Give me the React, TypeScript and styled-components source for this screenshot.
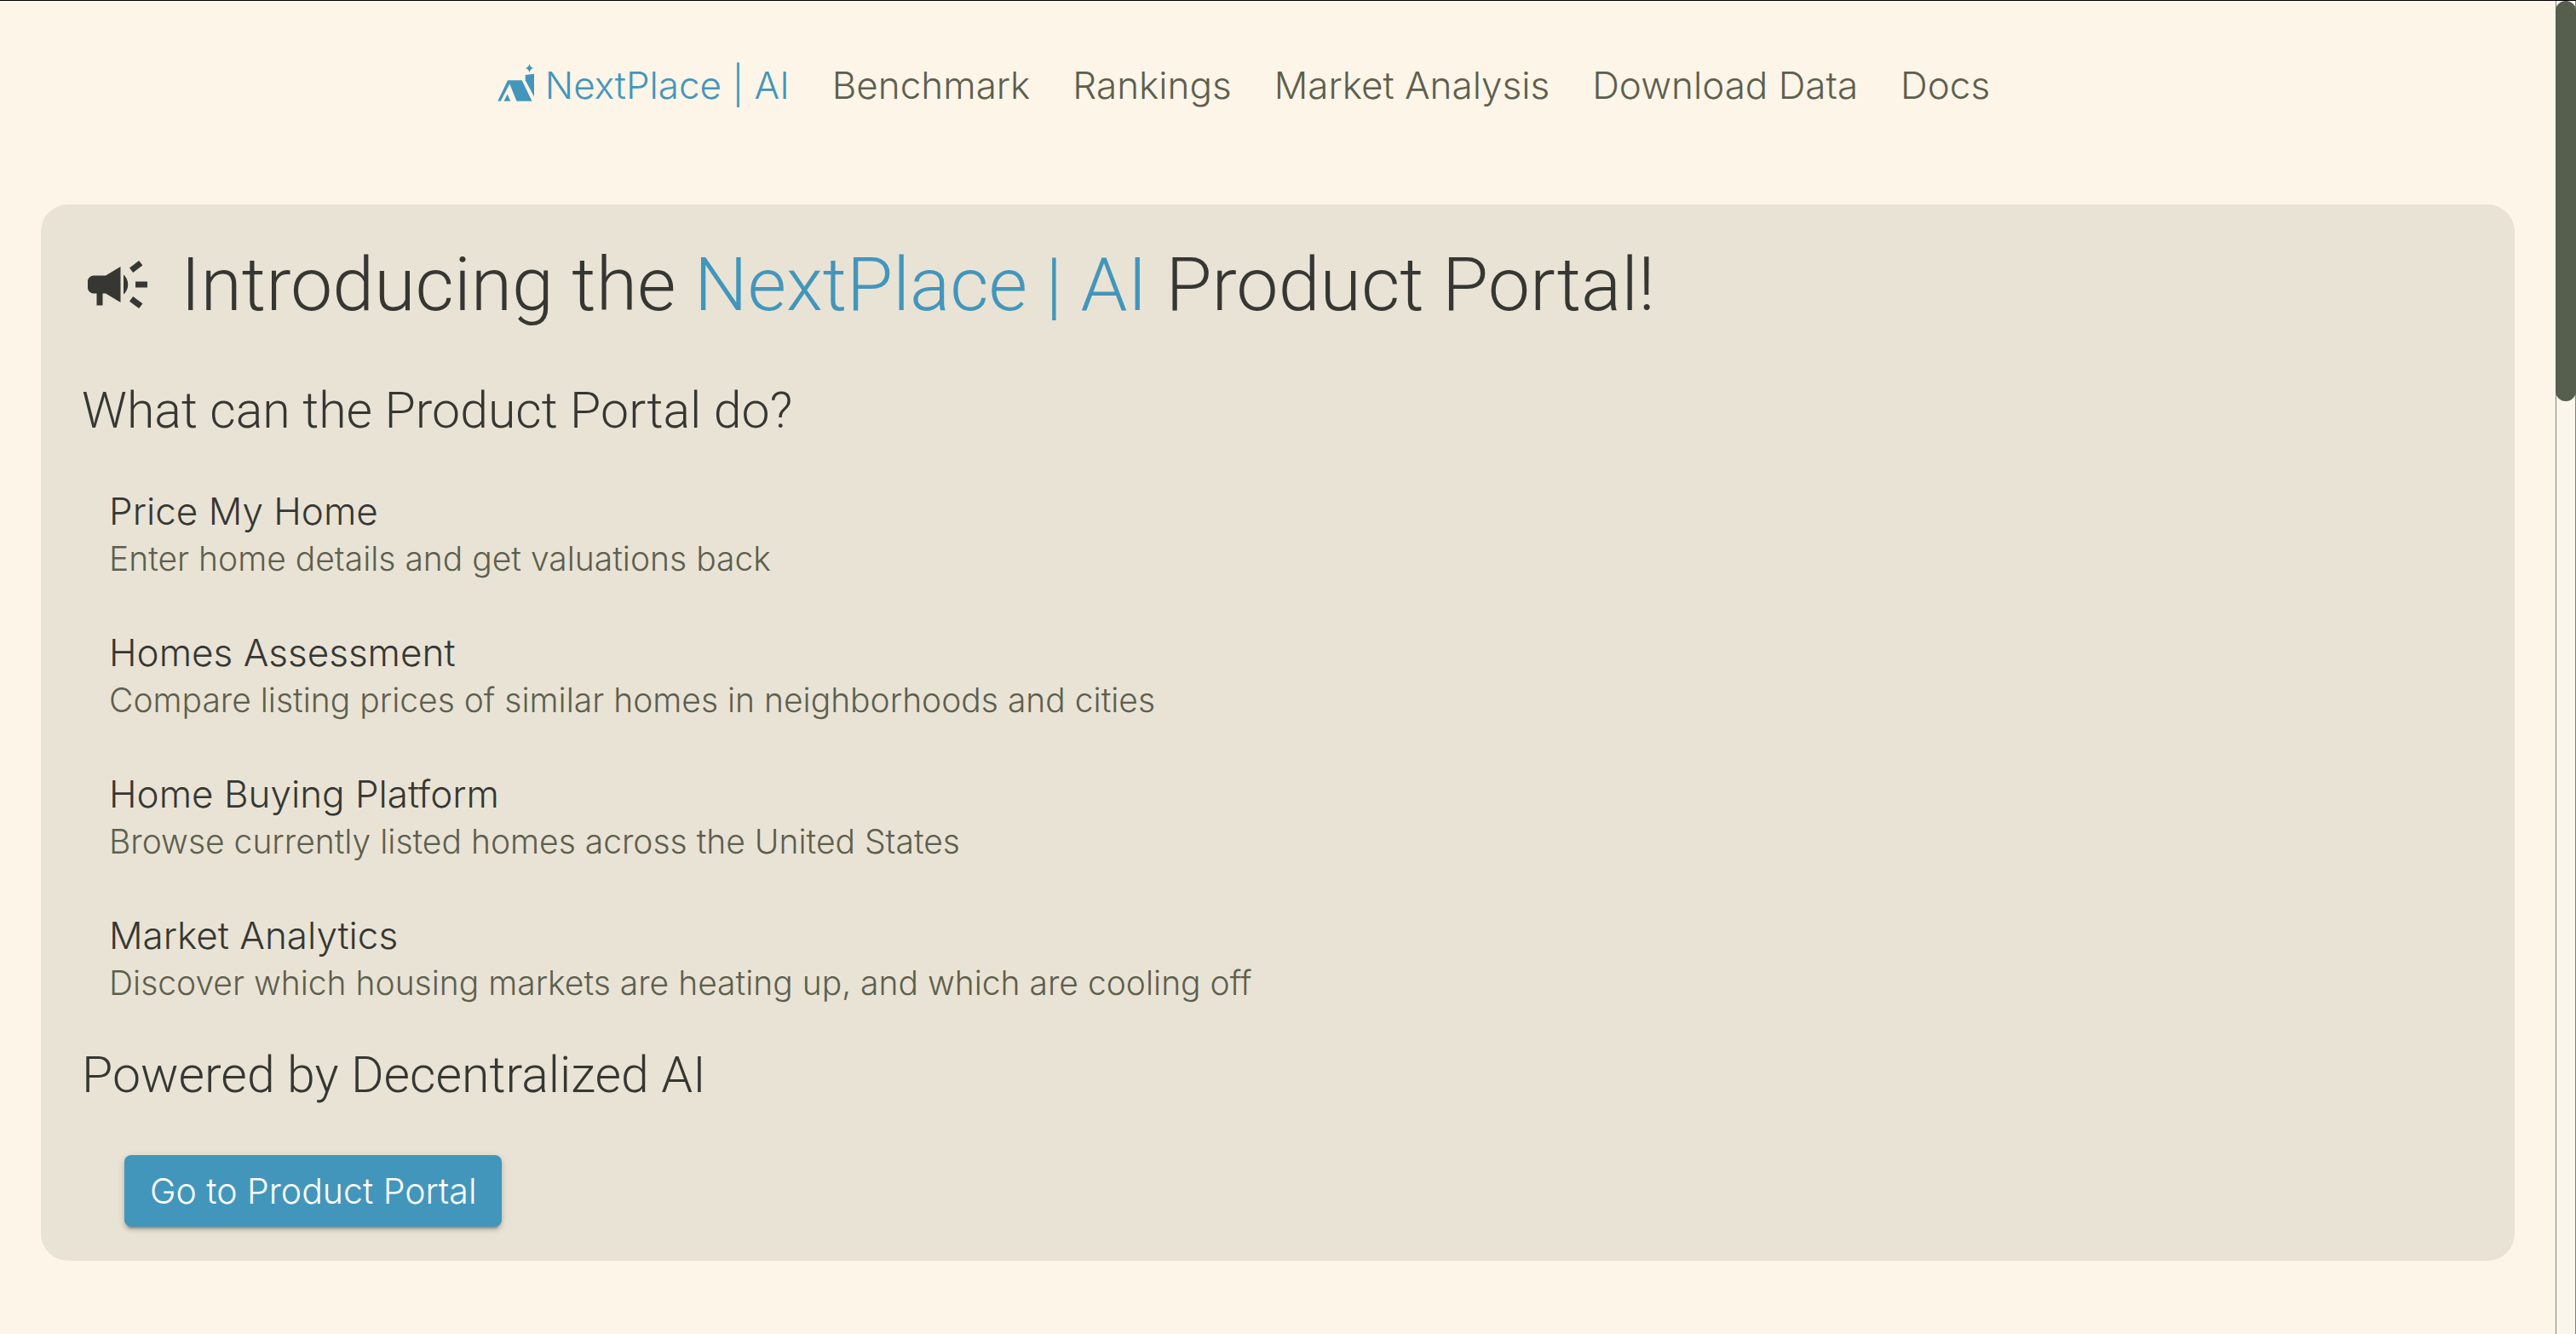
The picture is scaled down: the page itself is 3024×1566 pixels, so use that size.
import React from "react";
import styled, { createGlobalStyle } from "styled-components";
import { MdCampaign } from "react-icons/md";

const color = {
  page: "#fdf5e7",
  card: "#e9e3d5",
  accent: "#4396bb",
  ink: "#363733",
  muted: "#5d5f4e",
  thumb: "#565e4e",
};

const body = `"Inter", "Liberation Sans", sans-serif`;
const display = `"Roboto", "Liberation Sans", sans-serif`;

const GlobalStyle = createGlobalStyle`
  *, *::before, *::after { box-sizing: border-box; }
  body {
    margin: 0;
    background: ${color.page};
    color: ${color.ink};
    font-family: ${body};
    font-weight: 300;
    overflow: hidden;
  }
`;

const Shell = styled.div`
  display: flex;
  min-height: 100vh;
  border-top: 1px solid #000;
`;

const Page = styled.div`
  flex: 1;
  min-width: 0;
  padding: 0 48px;
`;

const Header = styled.header`
  display: flex;
  justify-content: center;
  padding: 71px 80px 112px 0;
`;

const Nav = styled.nav`
  display: flex;
  align-items: center;
  gap: 50px;
`;

const NavLink = styled.a<{ $brand?: boolean }>`
  display: flex;
  align-items: center;
  gap: 12px;
  color: ${(p) => (p.$brand ? color.accent : color.muted)};
  font-size: 44px;
  line-height: 56px;
  text-decoration: none;
  white-space: nowrap;
`;

const Mark = styled.svg`
  width: 44px;
  height: 50px;
  fill: currentColor;
`;

const Card = styled.main`
  padding: 48px 48px 40px;
  border-radius: 32px;
  background: ${color.card};
`;

const Title = styled.h1`
  display: flex;
  align-items: center;
  gap: 32px;
  margin: 0;
  font: 300 88px/92px ${display};

  svg {
    flex: none;
    width: 84px;
    height: 84px;
  }
`;

const Accent = styled.span`
  color: ${color.accent};
`;

const Subtitle = styled.h2<{ $top: number }>`
  margin: ${(p) => p.$top}px 0 0;
  font: 300 59px/76px ${display};
`;

const Features = styled.ul`
  display: flex;
  flex-direction: column;
  gap: 54px;
  margin: 52px 0 0;
  padding: 0 32px;
  list-style: none;
`;

const FeatureName = styled.h3`
  margin: 0;
  font-size: 44px;
  font-weight: 300;
  line-height: 56px;
`;

const FeatureText = styled.p`
  margin: 0;
  color: ${color.muted};
  font-size: 39px;
  line-height: 56px;
`;

const PortalButton = styled.button`
  display: block;
  margin: 56px 0 0 50px;
  padding: 0 30px;
  border: 0;
  border-radius: 8px;
  background: ${color.accent};
  color: #fff;
  font: 300 41px/84px ${body};
  box-shadow: 0 6px 2px -4px rgba(0, 0, 0, 0.2), 0 4px 4px rgba(0, 0, 0, 0.14), 0 2px 10px rgba(0, 0, 0, 0.12);
  cursor: pointer;
`;

const Track = styled.div`
  flex: none;
  width: 24px;
  border: solid #85807a;
  border-width: 0 1px;
  background: #fbf6ec;
`;

const Thumb = styled.div`
  width: 24px;
  height: 30vh;
  margin: 0 -1px;
  border-radius: 12px;
  background: ${color.thumb};
`;

const links = ["Benchmark", "Rankings", "Market Analysis", "Download Data", "Docs"];

const features = [
  { name: "Price My Home", text: "Enter home details and get valuations back" },
  { name: "Homes Assessment", text: "Compare listing prices of similar homes in neighborhoods and cities" },
  { name: "Home Buying Platform", text: "Browse currently listed homes across the United States" },
  { name: "Market Analytics", text: "Discover which housing markets are heating up, and which are cooling off" },
];

function Logo() {
  return (
    <Mark viewBox="5 5 44 50" aria-hidden="true">
      <path d="M5.300 48.700 L17 24.300 H33.700 L45.500 48.700 H27.500 L19.300 28.500 L8.700 48.700 Z" />
      <path d="M12.500 48.700 L16.700 40.500 L20.200 48.700 Z" />
      <path d="M37.700 18 L48 16.700 V43.500 L37.700 24.300 Z" />
      <path d="M42.500 4.800 Q43.300 9.200 47.500 10 Q43.300 10.800 42.500 15.200 Q41.700 10.800 37.500 10 Q41.700 9.200 42.500 4.800 Z" />
    </Mark>
  );
}

export default function App() {
  return (
    <>
      <GlobalStyle />
      <Shell>
        <Page>
          <Header>
            <Nav aria-label="Main">
              <NavLink href="#" $brand>
                <Logo />
                NextPlace | AI
              </NavLink>
              {links.map((label) => (
                <NavLink key={label} href="#">
                  {label}
                </NavLink>
              ))}
            </Nav>
          </Header>
          <Card>
            <Title>
              <MdCampaign aria-hidden="true" />
              <span>
                Introducing the <Accent>NextPlace | AI</Accent> Product Portal!
              </span>
            </Title>
            <Subtitle $top={64}>What can the Product Portal do?</Subtitle>
            <Features>
              {features.map((f) => (
                <li key={f.name}>
                  <FeatureName>{f.name}</FeatureName>
                  <FeatureText>{f.text}</FeatureText>
                </li>
              ))}
            </Features>
            <Subtitle $top={42}>Powered by Decentralized AI</Subtitle>
            <PortalButton type="button">Go to Product Portal</PortalButton>
          </Card>
        </Page>
        <Track>
          <Thumb />
        </Track>
      </Shell>
    </>
  );
}
